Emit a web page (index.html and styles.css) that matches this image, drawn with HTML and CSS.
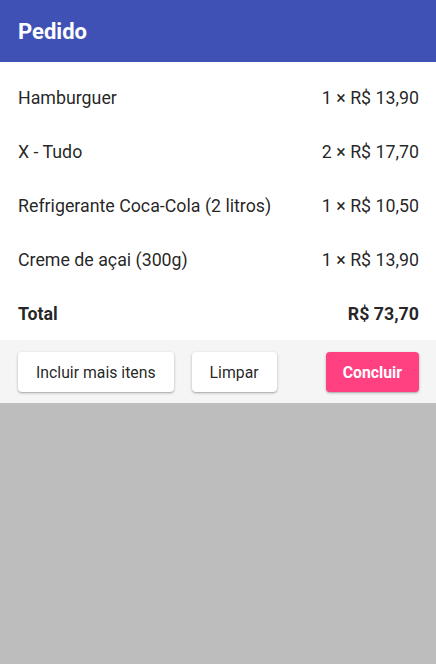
FILE: index.html
```html
<!DOCTYPE html>
<html lang="pt-BR">
<head>
<meta charset="utf-8">
<title>Pedido</title>
<link rel="stylesheet" href="styles.css">
</head>
<body>
<div class="sheet">
  <header class="bar"><h1 class="title">Pedido</h1></header>
  <ul class="list">
    <li class="row"><span>Hamburguer</span><span>1 × R$ 13,90</span></li>
    <li class="row"><span>X - Tudo</span><span>2 × R$ 17,70</span></li>
    <li class="row"><span>Refrigerante Coca-Cola (2 litros)</span><span>1 × R$ 10,50</span></li>
    <li class="row"><span>Creme de açai (300g)</span><span>1 × R$ 13,90</span></li>
    <li class="row total"><span>Total</span><span>R$ 73,70</span></li>
  </ul>
  <div class="actions">
    <button class="btn">Incluir mais itens</button>
    <button class="btn">Limpar</button>
    <span class="spacer"></span>
    <button class="btn primary">Concluir</button>
  </div>
</div>
</body>
</html>
```
FILE: styles.css
```css
html, body { margin: 0; padding: 0; }
body {
  background: #bdbdbd;
  font-family: Roboto, "Liberation Sans", sans-serif;
  color: rgba(0,0,0,0.87);
  width: 436px;
  height: 664px;
}
.sheet { background: #fff; }
.bar {
  background: #3f51b5;
  height: 62px;
  display: flex;
  align-items: center;
  padding: 0 18px;
}
.title {
  margin: 0;
  color: #fff;
  font-size: 22px;
  font-weight: 700;
}
.list {
  list-style: none;
  margin: 0;
  padding: 8px 0 0;
}
.row {
  height: 54px;
  display: flex;
  align-items: center;
  justify-content: space-between;
  padding: 0 17px 0 18px;
  font-size: 17.8px;
}
.row.total { font-weight: 700; }
.actions {
  background: #f5f5f5;
  display: flex;
  align-items: center;
  gap: 18px;
  padding: 12px 17px 11px 18px;
}
.spacer { flex: 1; }
.btn {
  height: 40px;
  padding: 0 18px;
  border: none;
  border-radius: 4px;
  background: #fff;
  color: rgba(0,0,0,0.87);
  font-family: Roboto, "Liberation Sans", sans-serif;
  font-size: 15.8px;
  box-shadow: 0 1px 3px rgba(0,0,0,0.25), 0 1px 1px rgba(0,0,0,0.12);
}
.btn.primary {
  background: #ff4081;
  color: #fff;
  font-weight: 700;
  padding: 0 17px;
}
```
